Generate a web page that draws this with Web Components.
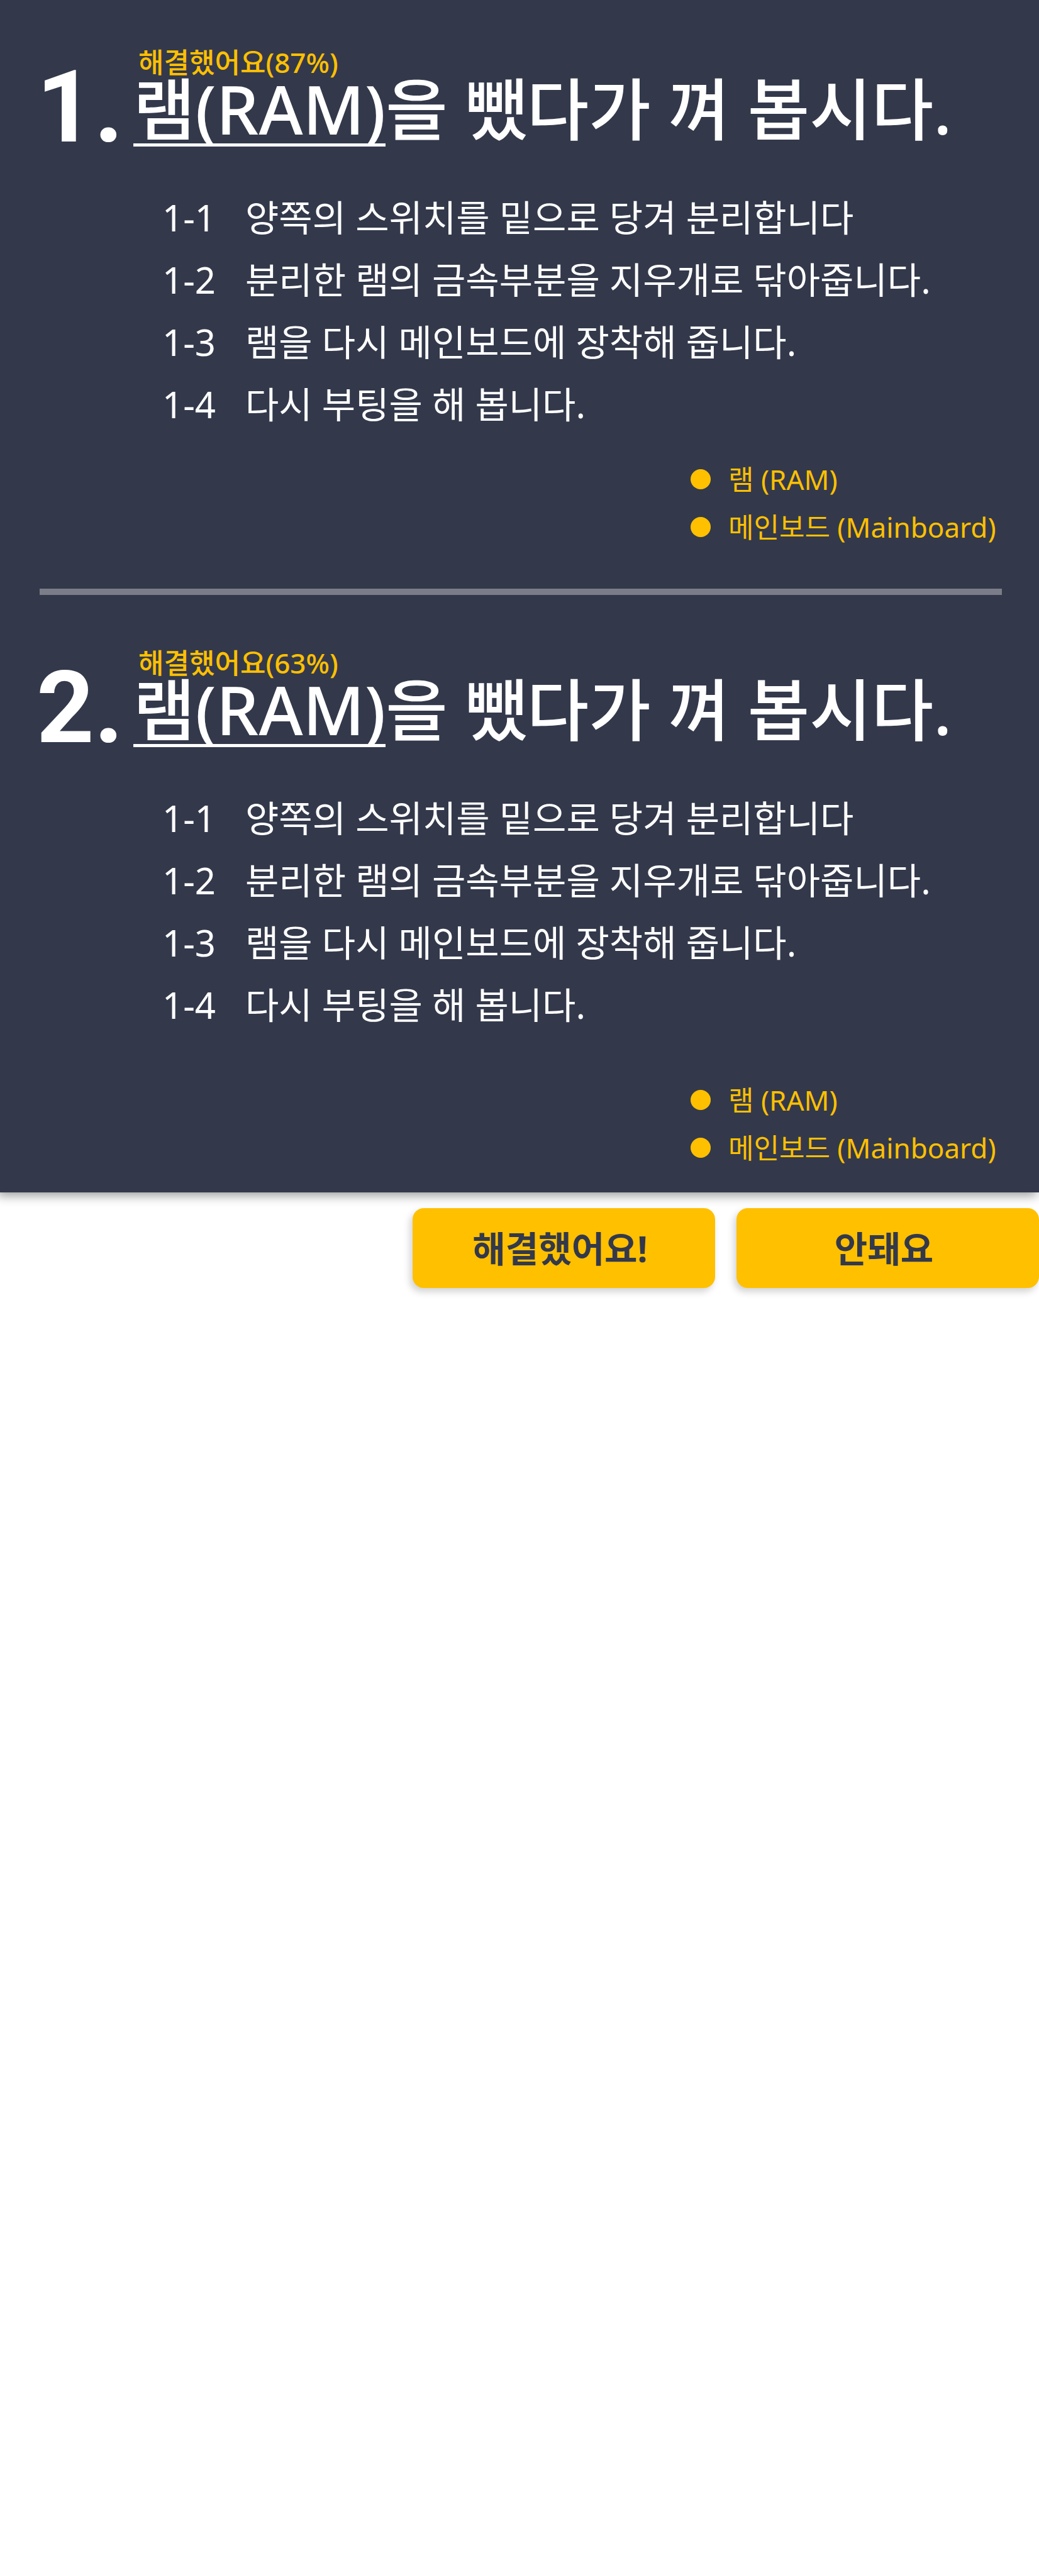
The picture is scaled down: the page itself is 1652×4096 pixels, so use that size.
<!DOCTYPE html>
<html lang="ko">
<head>
<meta charset="utf-8">
<title>램(RAM) 문제 해결</title>
<style>
body { margin: 0; background: #fff; font-family: "Noto Sans", "Noto Sans CJK KR", sans-serif; }
</style>
</head>
<body>
<repair-guide>
  <guide-case number="1" rate="해결했어요(87%)" part="램(RAM)" rest="을 뺐다가 껴 봅시다.">
    <guide-step no="1-1">양쪽의 스위치를 밑으로 당겨 분리합니다</guide-step>
    <guide-step no="1-2">분리한 램의 금속부분을 지우개로 닦아줍니다.</guide-step>
    <guide-step no="1-3">램을 다시 메인보드에 장착해 줍니다.</guide-step>
    <guide-step no="1-4">다시 부팅을 해 봅니다.</guide-step>
    <part-tag slot="tags">램 (RAM)</part-tag>
    <part-tag slot="tags">메인보드 (Mainboard)</part-tag>
  </guide-case>
  <guide-case class="last" number="2" rate="해결했어요(63%)" part="램(RAM)" rest="을 뺐다가 껴 봅시다.">
    <guide-step no="1-1">양쪽의 스위치를 밑으로 당겨 분리합니다</guide-step>
    <guide-step no="1-2">분리한 램의 금속부분을 지우개로 닦아줍니다.</guide-step>
    <guide-step no="1-3">램을 다시 메인보드에 장착해 줍니다.</guide-step>
    <guide-step no="1-4">다시 부팅을 해 봅니다.</guide-step>
    <part-tag slot="tags">램 (RAM)</part-tag>
    <part-tag slot="tags">메인보드 (Mainboard)</part-tag>
  </guide-case>
  <answer-button slot="actions">해결했어요!</answer-button>
  <answer-button slot="actions">안돼요</answer-button>
</repair-guide>
<script>
class Base extends HTMLElement {
  connectedCallback() {
    if (this.shadowRoot) return;
    this.attachShadow({ mode: "open" }).innerHTML = this.render();
  }
  attr(name) { return this.getAttribute(name) || ""; }
}

customElements.define("repair-guide", class extends Base {
  render() {
    return `<style>
      :host { display: block; }
      main { background: #33394b; color: #fff; padding: 71px 0 33px; box-shadow: -4px 5px 16px rgba(0,0,0,.4); }
      footer { display: flex; justify-content: flex-end; gap: 34px; padding: 25px 0 32px; }
    </style>
    <main><slot></slot></main>
    <footer><slot name="actions"></slot></footer>`;
  }
});

customElements.define("guide-case", class extends Base {
  render() {
    return `<style>
      :host { display: block; }
      header { display: flex; align-items: flex-end; }
      .number { box-sizing: border-box; width: 212px; padding-left: 58px; font: bold 160px/124px Roboto, "Liberation Sans", sans-serif; }
      .heading { flex: 1; }
      .rate { margin: 0 0 0 8px; color: #ffc000; font-size: 44px; font-weight: 500; line-height: 56px; }
      h2 { margin: 0; font-size: 107px; font-weight: 500; line-height: 92px; white-space: nowrap; }
      .part { display: inline-block; border-bottom: 5px solid #fff; padding: 0 0 9px; }
      ol { list-style: none; margin: 0; padding: 63px 0 0 258px; }
      ul { list-style: none; margin: 0 0 0 auto; padding: 32px 0 0; width: 554px; }
      :host(.last) ul { padding-top: 64px; }
      hr { margin: 60px 59px 80px 63px; border: 0; height: 10px; background: #7b7e88; }
      :host(.last) hr { display: none; }
    </style>
    <section>
      <header>
        <div class="number">${this.attr("number")}.</div>
        <div class="heading">
          <p class="rate">${this.attr("rate")}</p>
          <h2><span class="part">${this.attr("part")}</span>${this.attr("rest")}</h2>
        </div>
      </header>
      <ol role="list"><slot></slot></ol>
      <ul role="list"><slot name="tags"></slot></ul>
      <hr>
    </section>`;
  }
});

customElements.define("guide-step", class extends Base {
  render() {
    return `<style>
      :host { display: flex; font-size: 58px; line-height: 99px; white-space: nowrap; }
      .no { width: 132px; }
    </style>
    <span class="no">${this.attr("no")}</span><span><slot></slot></span>`;
  }
});

customElements.define("part-tag", class extends Base {
  render() {
    return `<style>
      :host { display: flex; align-items: center; gap: 28px; color: #ffc000; font-size: 44px; line-height: 76px; white-space: nowrap; }
      svg { width: 32px; height: 32px; fill: currentColor; }
    </style>
    <svg viewBox="0 0 32 32" aria-hidden="true"><circle cx="16" cy="16" r="16"/></svg><span><slot></slot></span>`;
  }
});

customElements.define("answer-button", class extends Base {
  render() {
    return `<style>
      :host { display: block; }
      button { display: block; width: 481px; height: 127px; padding: 0 12px 0 0; border: 0; border-radius: 18px; background: #ffc000; color: #33394b; font: bold 57px/80px "Noto Sans", "Noto Sans CJK KR", sans-serif; box-shadow: -4px 6px 12px rgba(0,0,0,.18); cursor: pointer; }
    </style>
    <button type="button"><slot></slot></button>`;
  }
});
</script>
</body>
</html>
